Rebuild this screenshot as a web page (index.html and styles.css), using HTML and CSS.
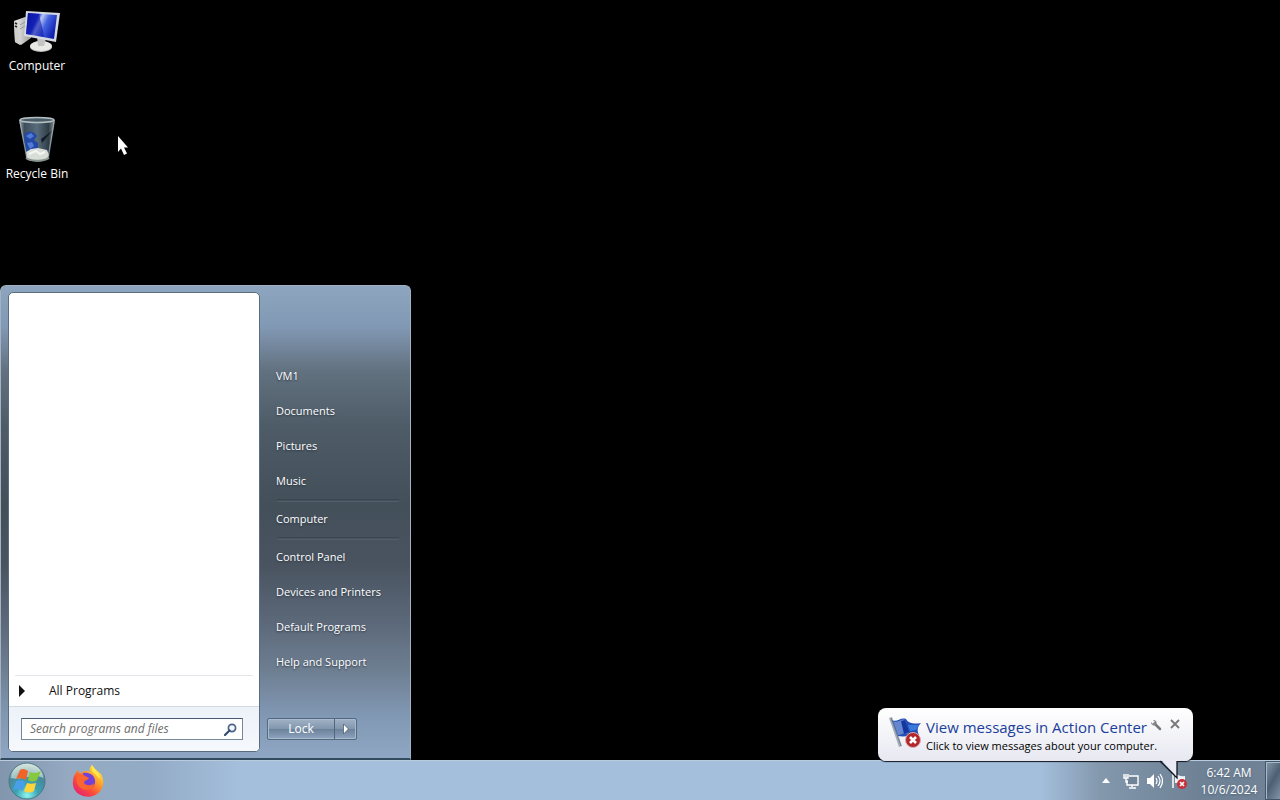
FILE: index.html
```html
<!DOCTYPE html>
<html lang="en">
<head>
<meta charset="utf-8">
<title>Desktop</title>
<link rel="stylesheet" href="styles.css">
</head>
<body>
<main class="desktop">
  <nav class="shortcuts" aria-label="Desktop shortcuts">
    <button class="shortcut">
      <svg width="48" height="48" viewBox="0 0 48 48" aria-hidden="true">
        <defs>
          <linearGradient id="screen" x1="0" y1=".1" x2="1" y2=".5">
            <stop offset="0" stop-color="#0a1390"/><stop offset=".34" stop-color="#1a2fd0"/><stop offset=".46" stop-color="#b9c8f5"/><stop offset=".66" stop-color="#4463e0"/><stop offset="1" stop-color="#1020b0"/>
          </linearGradient>
          <linearGradient id="case" x1="0" y1="0" x2="1" y2="0"><stop offset="0" stop-color="#f2f2f0"/><stop offset="1" stop-color="#9a9a98"/></linearGradient>
        </defs>
        <path d="M1 13 12 9 18 12V30L8 37 2 34Z" fill="url(#case)"/>
        <path d="M1 13 5 14 7 37 2 34Z" fill="#cfcfcc"/>
        <path d="M2 15 4 16M2 18 4 19" stroke="#222" stroke-width="1.500"/>
        <path d="M7 17 12 14M7 21 12 18" stroke="#999" stroke-width="1"/>
        <ellipse cx="28" cy="39" rx="11" ry="5" fill="#bdbdba"/>
        <ellipse cx="28" cy="38" rx="11" ry="5" fill="#e9e9e6"/>
        <path d="M24 28 33 30 31 38H25Z" fill="#c4c4c2"/>
        <path d="M13 3 47 5 43 34 11 28Z" fill="#d5d9e2"/>
        <path d="M15 5 44 7 41 31 13 26Z" fill="url(#screen)"/>
        <path d="M15 5 26 6C27 12 30 20 31 29L13 26Z" fill="#0d17a6" opacity=".6"/>
      </svg>
      <span>Computer</span>
    </button>
    <button class="shortcut">
      <svg width="48" height="48" viewBox="0 0 48 48" aria-hidden="true">
        <defs>
          <linearGradient id="bin" x1="0" y1="0" x2="1" y2="0"><stop offset="0" stop-color="#a4b1b8"/><stop offset=".15" stop-color="#3d4d5b"/><stop offset=".5" stop-color="#586c7c"/><stop offset=".82" stop-color="#303d47"/><stop offset="1" stop-color="#8d999c"/></linearGradient>
        </defs>
        <path d="M6 4H42L36 42C34 47 15 47 13 42Z" fill="url(#bin)"/>
        <path d="M11 19C15 14 21 15 24 20L21 24 25 27V33L19 34 17 37 13 35Z" fill="#2448a6"/>
        <path d="M13 20 18 17 21 20 17 23ZM14 27 19 26 21 30 17 33Z" fill="#4f7ad6"/>
        <path d="M39 15 29 27 28 23Z" fill="#121d28"/>
        <path d="M13 36 18 33 25 32 34 34 36 39 34 43C29 46 18 46 14 43Z" fill="#d8ddd8"/>
        <path d="M16 38 23 35 27 38 32 36" fill="none" stroke="#f4f6f3" stroke-width="2"/>
        <path d="M13 42C17 45 30 46 36 42" fill="none" stroke="#88948f" stroke-width="2"/>
        <ellipse cx="24" cy="4" rx="17" ry="2.500" fill="#4a5c68" stroke="#b4c0c2" stroke-width="1.500"/>
        <path d="M7 6 14 42M41 6 35 42" stroke="#b2bdbf" stroke-width="1" opacity=".7"/>
      </svg>
      <span>Recycle Bin</span>
    </button>
  </nav>

  <svg class="pointer" width="12" height="20" viewBox="0 0 12 20" aria-hidden="true"><path d="M1 0V16L4 12.500 7 19 10 17.500 7 11.500H11Z" fill="#fff"/></svg>

  <section class="start-menu" aria-label="Start menu">
    <div class="programs">
      <div class="program-list"></div>
      <button class="all-programs"><svg width="6" height="12" viewBox="0 0 6 12" aria-hidden="true"><path d="M0 0 6 6 0 12Z" fill="#111"/></svg>All Programs</button>
      <form class="search">
        <div class="search-box">
          <input type="text" placeholder="Search programs and files" aria-label="Search programs and files">
          <svg width="13" height="13" viewBox="0 0 13 13" aria-hidden="true"><circle cx="8" cy="5" r="3.600" fill="#f1f7fd" stroke="#4c6287" stroke-width="1.700"/><path d="M5.500 7.500 1 12" stroke="#334b70" stroke-width="2.200" stroke-linecap="round"/></svg>
        </div>
      </form>
    </div>
    <div class="places">
      <nav class="links" aria-label="Places">
        <a href="#">VM1</a>
        <a href="#">Documents</a>
        <a href="#">Pictures</a>
        <a href="#">Music</a>
        <hr>
        <a href="#">Computer</a>
        <hr>
        <a href="#">Control Panel</a>
        <a href="#">Devices and Printers</a>
        <a href="#">Default Programs</a>
        <a href="#">Help and Support</a>
      </nav>
      <div class="power">
        <button class="lock">Lock</button>
        <button class="power-more" aria-label="More power options"><svg width="6" height="10" viewBox="0 0 6 10" aria-hidden="true"><path d="M.5 0 5.500 5 .5 10Z" fill="#fff" stroke="#3e5166" stroke-width=".7"/></svg></button>
      </div>
    </div>
  </section>
</main>

<aside class="balloon" aria-label="Notification">
  <svg class="balloon-icon" width="32" height="32" viewBox="0 0 32 32" aria-hidden="true">
    <path d="M0 1 3 0 13 29 10 30Z" fill="#a2adb9"/><path d="M2 1 12 29" stroke="#77828e" stroke-width="1"/>
    <path d="M3 3C8 6 11 0 17 2 20 7 26 7 32 6 28 10 28 14 30 18 23 16 19 21 9 19Z" fill="#2450b5"/>
    <path d="M4 4C9 7 12 1 16 3L19 17C15 15 13 18 9 18Z" fill="#6687cf"/>
    <path d="M12 4 16 3 20 15 15 17Z" fill="#1536a0"/>
    <path d="M19 8 30 8 27 13 21 14Z" fill="#3979dc"/>
    <circle cx="24" cy="23" r="7.500" fill="#b4282c" stroke="#d1acae"/>
    <path d="M21 20 27 26M27 20 21 26" stroke="#fff" stroke-width="2.600"/>
  </svg>
  <div class="balloon-text">
    <a class="balloon-title" href="#">View messages in Action Center</a>
    <p>Click to view messages about your computer.</p>
  </div>
  <div class="balloon-tools">
    <button aria-label="Customize"><svg width="12" height="12" viewBox="0 0 12 12" aria-hidden="true"><path d="M4.500 4.500 10 10" stroke="#777" stroke-width="2.500" stroke-linecap="round"/><path d="M1 3 3 5 5 3 3 1A3 3 0 0 1 6.500 5 3 3 0 0 1 1 3Z" fill="#858585"/></svg></button>
    <button aria-label="Close"><svg width="10" height="10" viewBox="0 0 10 10" aria-hidden="true"><path d="M1 1 9 9M9 1 1 9" stroke="#777" stroke-width="1.800"/></svg></button>
  </div>
  <svg class="tail" width="20" height="20" viewBox="0 0 20 20" aria-hidden="true"><path d="M1 0 17 17V0Z" fill="#e9eaf3"/><path d="M0 1 17 18V1" fill="none" stroke="#111722" stroke-width="1.300"/></svg>
</aside>

<footer class="taskbar">
  <button class="start" aria-label="Start">
    <svg width="38" height="38" viewBox="0 0 38 38" aria-hidden="true">
      <defs><radialGradient id="orb" cx=".5" cy=".9" r=".9"><stop offset="0" stop-color="#8ff5ef"/><stop offset=".35" stop-color="#3aa3b4"/><stop offset=".7" stop-color="#4a8799"/><stop offset="1" stop-color="#c8dcd8"/></radialGradient></defs>
      <circle cx="19" cy="19" r="18" fill="url(#orb)" stroke="#4d7886"/>
      <path d="M3 16C4 4 16 1 21 2 30 3 35 10 35 16 25 10 15 19 3 16Z" fill="#e9f4e6" opacity=".55"/>
      <path d="M12 8C15 6 17 7 20 9L18 18C14 16 11 16 8 17Z" fill="#ee6429"/>
      <path d="M22 10C25 12 29 11 33 9L29 18C26 20 23 20 20 18Z" fill="#86c83e"/>
      <path d="M8 19C12 18 14 18 17 20L15 29C11 26 8 27 5 28Z" fill="#489ee8"/>
      <path d="M19 21C22 22 25 22 28 21L26 29C22 31 19 31 16 29Z" fill="#ffd43b"/>
    </svg>
  </button>
  <button class="task" aria-label="Firefox">
    <svg width="32" height="32" viewBox="0 0 32 32" aria-hidden="true">
      <defs><linearGradient id="fox" x1=".85" y1=".1" x2=".2" y2=".9"><stop offset="0" stop-color="#ffe84a"/><stop offset=".35" stop-color="#ff9f27"/><stop offset=".7" stop-color="#fa4d3c"/><stop offset="1" stop-color="#e92869"/></linearGradient></defs>
      <path d="M20 0C22 4 26 6 29 9 32 14 32 20 29 25 25 31 18 33 11 31 4 29 0 23 1 16 1 12 3 8 6 5L8 9C10 6 14 5 18 7 17 4 18 2 20 0Z" fill="url(#fox)"/>
      <path d="M11 8C16 7 22 9 23 15 24 22 18 25 13 22 9 20 9 16 11 14Z" fill="#7441d8"/>
      <path d="M5 9C8 8 11 9 13 11L17 13C15 16 12 15 12 18 14 21 20 21 22 18 22 24 15 27 9 23 4 20 4 13 5 9Z" fill="#fb6530"/>
      <path d="M20 0C23 5 28 8 28 14L25 11C23 8 18 7 20 0Z" fill="#ffe84e"/>
    </svg>
  </button>
  <div class="tray">
    <button aria-label="Show hidden icons"><svg width="8" height="5" viewBox="0 0 8 5" aria-hidden="true"><path d="M0 5 4 0 8 5Z" fill="#fff"/></svg></button>
    <button aria-label="Network"><svg width="16" height="16" viewBox="0 0 16 16" fill="none" stroke="#fff" stroke-width="1.400" aria-hidden="true"><path d="M6 3H15V12H4V7" fill="#718397"/><path d="M1 1V5H5V1M3 1V4M3 5V9H5M9 12V14M6 15H13"/></svg></button>
    <button aria-label="Volume"><svg width="16" height="16" viewBox="0 0 16 16" fill="none" stroke="#fff" stroke-width="1.200" aria-hidden="true"><path d="M0 5H3L7 1V15L3 11H0Z" fill="#fff" stroke="none"/><path d="M9 5Q11 8 9 11M11 3Q15 8 11 13M13 1Q18 8 13 15"/></svg></button>
    <button aria-label="Action Center"><svg width="18" height="16" viewBox="0 0 18 16" aria-hidden="true"><path d="M2 1V15" stroke="#fff" stroke-width="1.500"/><path d="M4 2C8 1 8 4 14 3V10H4Z" fill="#f0f2f5"/><circle cx="11" cy="11" r="5" fill="#c82f38"/><path d="M9 9 13 13M13 9 9 13" stroke="#fff" stroke-width="1.700"/></svg></button>
  </div>
  <button class="clock"><time datetime="06:42">6:42 AM</time><time datetime="2024-10-06">10/6/2024</time></button>
  <button class="show-desktop" aria-label="Show desktop"></button>
</footer>
</body>
</html>
```
FILE: styles.css
```css
* { box-sizing: border-box; }

body {
  margin: 0;
  min-height: 100vh;
  display: flex;
  flex-direction: column;
  position: relative;
  overflow: hidden;
  background: #000;
  color: #fff;
  font: 12px/16px "Open Sans", "Noto Sans", sans-serif;
}

button {
  margin: 0;
  padding: 0;
  border: 0;
  background: none;
  color: inherit;
  font: inherit;
}

a { color: inherit; text-decoration: none; }
svg { display: block; flex: none; }

.desktop { flex: 1; position: relative; }

.shortcuts {
  display: flex;
  flex-direction: column;
  align-items: flex-start;
  gap: 36px;
  padding-top: 8px;
}

.shortcut {
  width: 74px;
  height: 72px;
  display: flex;
  flex-direction: column;
  align-items: center;
  gap: 2px;
  white-space: nowrap;
}

.pointer { position: absolute; left: 117px; top: 136px; }

.start-menu {
  position: absolute;
  left: 0;
  bottom: 0;
  width: 411px;
  height: 475px;
  display: flex;
  padding: 6px 0 6px 7px;
  border: 1px solid #a3b1c2;
  border-bottom: 2px solid #344b5f;
  border-radius: 6px 6px 0 0;
  background: linear-gradient(#8ea5bf 0, #8299b5 40px, #62717f 85px, #4e5c68 140px, #434f59 220px, #4a5461 280px, #5d6a7b 340px, #6e7f92 385px, #8198b4 430px, #8fa7c4 100%);
}

.programs {
  width: 252px;
  display: flex;
  flex-direction: column;
  border: 1px solid #596c80;
  border-radius: 5px;
  background: #fff;
  overflow: hidden;
  color: #111;
}

.program-list { flex: 1; }

.all-programs {
  height: 31px;
  margin: 0 6px;
  padding-left: 4px;
  display: flex;
  align-items: center;
  gap: 24px;
  border-top: 1px solid #e3e7ec;
}

.search {
  height: 45px;
  padding: 11px 16px 0 12px;
  border-top: 1px solid #d2dae4;
  background: linear-gradient(#edf2f9, #f5f8fc);
}

.search-box {
  height: 22px;
  display: flex;
  align-items: center;
  padding: 0 5px 0 8px;
  border: 1px solid #75879a;
  border-top-color: #485b70;
  background: #fff;
}

.search-box input {
  flex: 1;
  min-width: 0;
  padding: 0;
  border: 0;
  outline: 0;
  background: none;
  color: #111;
  font: inherit;
}

.search-box input::placeholder { color: #6d6d6d; font-style: italic; opacity: 1; }

.places {
  flex: 1;
  display: flex;
  flex-direction: column;
  justify-content: space-between;
  padding: 67px 7px 12px;
}

.links { display: flex; flex-direction: column; font-size: 11px; }
.links a { padding: 9px 0 10px 9px; text-shadow: 0 1px 2px #2a3540; }
.links hr {
  width: 122px;
  height: 3px;
  margin: 0 0 0 10px;
  border: 0;
  border-top: 1px solid #3b4750;
  border-bottom: 1px solid #525e69;
}

.power {
  width: 90px;
  height: 22px;
  display: flex;
  border: 1px solid #536980;
  border-radius: 2px;
  background: linear-gradient(#a1b2c6 0, #8297ad 48%, #6b8199 50%, #8fa5c0 100%);
  box-shadow: inset 0 0 0 1px #a9bacf;
}
.lock { flex: 1; border-right: 1px solid #50667d; }
.power-more { width: 21px; display: grid; place-items: center; }

.balloon {
  position: absolute;
  right: 87px;
  bottom: 39px;
  width: 315px;
  height: 53px;
  z-index: 2;
  display: flex;
  padding: 9px 13px 0 11px;
  border-radius: 8px;
  background: linear-gradient(#fff, #e7e8f1);
  box-shadow: 0 1px 1px #10151d;
  color: #000;
  white-space: nowrap;
}
.balloon-text { width: 222px; margin-left: 5px; }
.balloon-title { display: block; font-size: 15px; line-height: 20px; color: #1b409c; }
.balloon p { margin: 0; font-size: 11px; line-height: 18px; }
.balloon-tools { display: flex; align-items: flex-start; gap: 8px; margin-left: auto; padding-top: 2px; }
.tail { position: absolute; right: 13px; top: 52px; }

.taskbar {
  height: 40px;
  display: flex;
  align-items: stretch;
  border-top: 1px solid #b9cbdd;
  background: linear-gradient(90deg, #8196ad 0, #95aac2 70px, #93abc6 150px, #a4bfdc 240px, #a4bfdc 1040px, #8398ad 1100px, #6e8195 1200px, #718296 100%);
}

.start { padding-left: 8px; }
.task { padding-left: 26px; }
.start, .task { display: flex; align-items: center; }

.tray {
  display: flex;
  align-items: center;
  gap: 8px;
  margin-left: auto;
}
.tray button:first-child { margin-right: 5px; }

.clock {
  width: 76px;
  padding-left: 4px;
  display: flex;
  flex-direction: column;
  align-items: center;
  justify-content: center;
  line-height: 17px;
  text-shadow: 0 1px 2px #526477;
}

.show-desktop {
  width: 15px;
  border: 1px solid #42566a;
  border-right: 0;
  background: linear-gradient(120deg, #8798aa, #4d6073 50%, #8295a8);
  box-shadow: inset 1px 1px 0 #a9b8c5;
}
```
